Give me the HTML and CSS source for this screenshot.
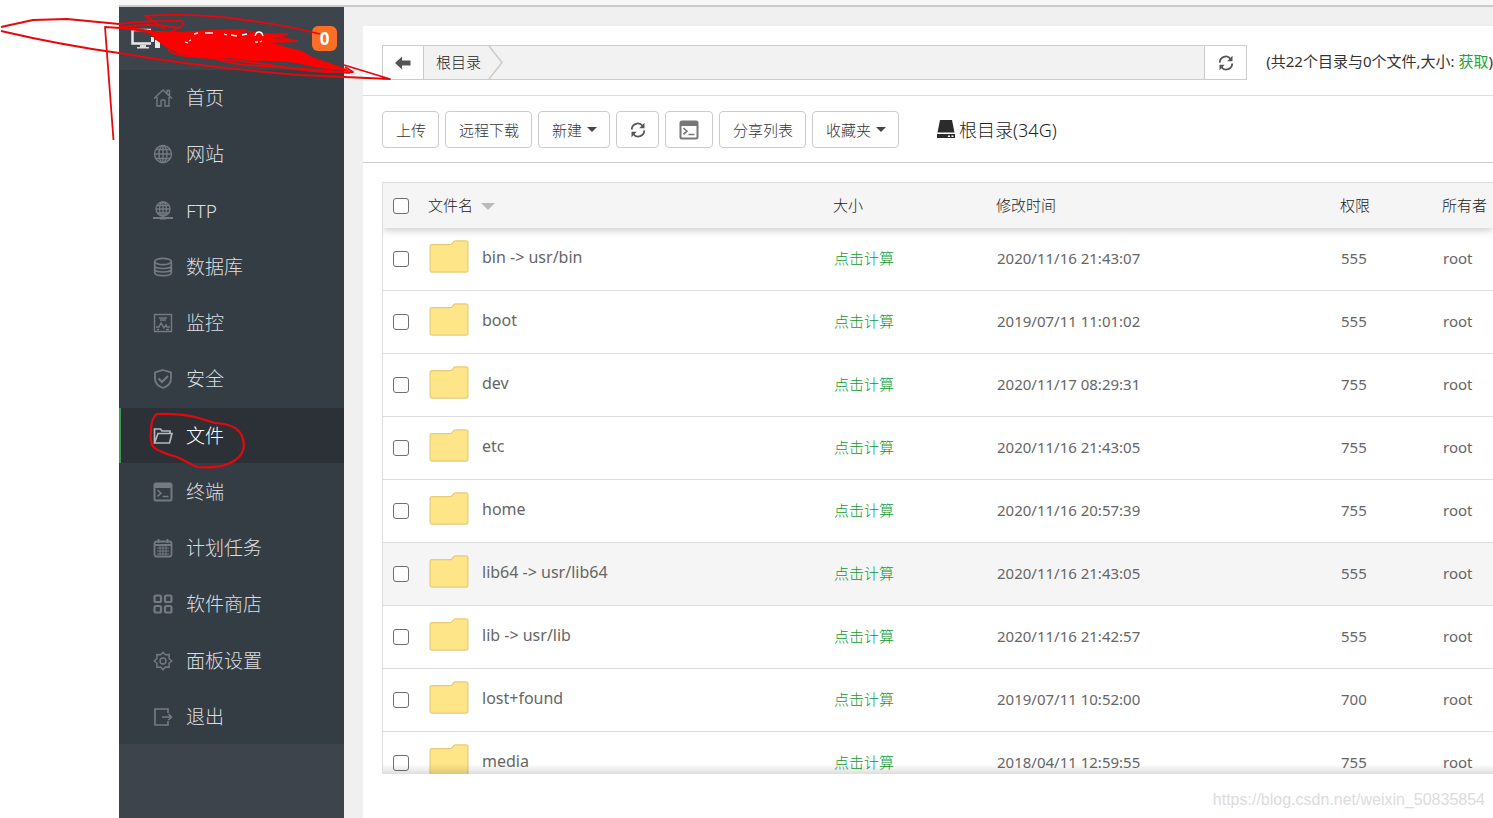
FILE: index.html
```html
<!DOCTYPE html>
<html lang="zh-CN">
<head>
<meta charset="utf-8">
<title>文件</title>
<link rel="stylesheet" href="styles.css">
</head>
<body>
<svg class="defs" width="0" height="0" aria-hidden="true">
  <defs>
    <symbol id="folder" viewBox="0 0 42 36"><path d="M1 7q0-2 2-2h19q2 0 3-2t3-2h11q2 0 2 2v29q0 2-2 2H3q-2 0-2-2z" fill="#fde588" stroke="#e6cc78" stroke-width="1.3"/></symbol>
    <symbol id="refresh" viewBox="0 0 16 16"><path d="M1.800 7.500A6 6 0 0 1 12.500 3.800M14.200 8.500A6 6 0 0 1 3.500 12.200" fill="none" stroke="#555" stroke-width="1.800"/><path d="M14.500.8v5.400H9.200zM1.500 15.200V9.800h5.300z" fill="#555"/></symbol>
    <symbol id="terminal" viewBox="0 0 20 20"><rect x="1.500" y="1.500" width="17" height="17" rx="1.500" fill="none" stroke="currentColor" stroke-width="2"/><path d="M1 2h18v4H1z" fill="currentColor"/><path d="M4.500 8l3.500 3.200-3.500 3.200M9.500 14.500h6" fill="none" stroke="currentColor" stroke-width="1.600"/></symbol>
  </defs>
</svg>
<div class="topline"></div>
<div class="app">
  <aside class="sidebar">
    <div class="brand">
      <svg width="32" height="22" viewBox="0 0 32 22" aria-hidden="true"><path d="M1.500 2v13.500H20M1.500 2H20" fill="none" stroke="#e8e8e8" stroke-width="2.500"/><path d="M9 17h6v2h3v1.500H6V19h3z" fill="#ddd"/><path d="M21 4h3v3h-3zM25 3h3v3h-3zM20 9h3v5h-3zM24 12h5v8h-5z" fill="#e8e8e8"/></svg>
      <span class="badge">0</span>
    </div>
    <nav class="menu">
      <a href="#"><svg viewBox="0 0 20 20"><path d="M1 10.500L10 2l9 8.500M4 9v9h4v-5q0-1 1-1h2q1 0 1 1v5h4V9M14 5V2.500h2.500v5"/></svg>首页</a>
      <a href="#"><svg viewBox="0 0 20 20"><circle cx="10" cy="10" r="8.500"/><ellipse cx="10" cy="10" rx="4" ry="8.500"/><path d="M10 1.500v17M1.500 10h17M3 5.500h14M3 14.500h14"/></svg>网站</a>
      <a href="#"><svg viewBox="0 0 20 20"><circle cx="10" cy="8" r="7"/><ellipse cx="10" cy="8" rx="3.500" ry="7"/><path d="M10 1v17M3 8h14M4 4.500h12M4 12h12"/><path d="M0 17h20M7 17.500h6" stroke-width="2"/></svg>FTP</a>
      <a href="#"><svg viewBox="0 0 20 20"><g stroke-width="1.700"><ellipse cx="10" cy="4.500" rx="8.300" ry="3.200"/><path d="M1.700 4.500v11c0 4.200 16.600 4.200 16.600 0v-11M1.700 8.500c0 4 16.600 4 16.600 0M1.700 12c0 4 16.600 4 16.600 0"/></g></svg>数据库</a>
      <a href="#"><svg viewBox="0 0 20 20"><path d="M1.500 1.500h17v17h-17zM6 5h8M7 7h6M3 14h3l2-4 3 5 2-3 1 2h3M4 16.500h2M13 16.500h3"/></svg>监控</a>
      <a href="#"><svg viewBox="0 0 20 20"><path d="M10 1L18 3.500v6c0 5-4 8-8 9.500-4-1.500-8-4.500-8-9.500v-6z" stroke-width="1.800"/><path d="M5.500 9.500l3.500 3.500 6-6" stroke-width="2.200"/></svg>安全</a>
      <a href="#" class="active"><svg viewBox="0 0 20 20"><path d="M1.500 17V3h6l1.500 2h8v3M1.500 17L5 7.500h14L16.500 17z" stroke-width="1.700"/></svg>文件</a>
      <a href="#"><svg viewBox="0 0 20 20" class="solid"><use href="#terminal"/></svg>终端</a>
      <a href="#"><svg viewBox="0 0 20 20"><rect x="1.500" y="3.500" width="17" height="15" rx="2" stroke-width="1.800"/><path d="M5.500 1v4M14.500 1v4M2 7h16" stroke-width="1.800"/><path d="M4 10h12M4 13h12M4 16h12M7 8v9M10 8v9M13 8v9" stroke-width="1"/></svg>计划任务</a>
      <a href="#"><svg viewBox="0 0 20 20"><g stroke-width="2.200"><rect x="1.500" y="1.500" width="6.500" height="6.500" rx="1.500"/><rect x="12" y="1.500" width="6.500" height="6.500" rx="1.500"/><rect x="1.500" y="12" width="6.500" height="6.500" rx="1.500"/><rect x="12" y="12" width="6.500" height="6.500" rx="1.500"/></g></svg>软件商店</a>
      <a href="#"><svg viewBox="0 0 20 20"><circle cx="10" cy="10" r="3"/><path d="M10 1.200l2.300 2.600 3.900-.3-.2 3.900L18.800 10 16 12.300l.2 3.900-3.900-.2L10 18.800 7.700 16l-3.900.2.200-3.900L1.200 10 4 7.400l-.2-3.900 3.900.3z"/></svg>面板设置</a>
      <a href="#"><svg viewBox="0 0 20 20"><path d="M15 6V2H2v16h13v-4M9 10h9M15.500 7l3 3-3 3" stroke-width="1.700"/></svg>退出</a>
    </nav>
  </aside>
  <main class="panel">
    <div class="pathrow">
      <div class="pathbar">
        <button class="square" aria-label="返回"><svg width="16" height="14" viewBox="0 0 16 14"><path d="M0 7l7-6.500V4.500h8.500v5H7v4z" fill="#555"/></svg></button>
        <a class="crumb" href="#">根目录</a>
        <svg class="chevron" width="16" height="33" viewBox="0 0 16 33" aria-hidden="true"><path d="M1 0l13 16.500L1 33" fill="none" stroke="#ccc" stroke-width="1.600"/></svg>
        <span class="fill"></span>
        <button class="square reload" aria-label="刷新"><svg width="16" height="16"><use href="#refresh"/></svg></button>
      </div>
      <div class="stats">(共22个目录与0个文件,大小: <a href="#">获取</a>)</div>
    </div>
    <div class="toolbar">
      <button>上传</button>
      <button>远程下载</button>
      <button>新建<i class="caret"></i></button>
      <button aria-label="刷新"><svg width="16" height="16"><use href="#refresh"/></svg></button>
      <button aria-label="终端" class="term"><svg width="20" height="20"><use href="#terminal"/></svg></button>
      <button>分享列表</button>
      <button>收藏夹<i class="caret"></i></button>
      <div class="disk"><svg width="20" height="20" viewBox="0 0 20 20" aria-hidden="true"><path d="M4 0h12l2.500 12.500h-17zM1 14h18v4H1z" fill="#2b2b2b"/><path d="M12 15.500h2V17h-2zM15.500 15.500h2V17h-2z" fill="#fff"/></svg>根目录(34G)</div>
    </div>
    <div class="files">
      <table>
        <colgroup><col class="c-check"><col class="c-name"><col class="c-size"><col class="c-time"><col class="c-mode"><col></colgroup>
        <thead><tr><th><input type="checkbox" aria-label="全选"></th><th>文件名<i class="sort"></i></th><th>大小</th><th>修改时间</th><th>权限</th><th>所有者</th></tr></thead>
        <tbody>
          <tr><td><input type="checkbox" aria-label="bin"></td><td><div class="name"><svg width="40" height="34"><use href="#folder"/></svg><span>bin -&gt; usr/bin</span></div></td><td><a href="#">点击计算</a></td><td>2020/11/16 21:43:07</td><td>555</td><td>root</td></tr>
          <tr><td><input type="checkbox" aria-label="boot"></td><td><div class="name"><svg width="40" height="34"><use href="#folder"/></svg><span>boot</span></div></td><td><a href="#">点击计算</a></td><td>2019/07/11 11:01:02</td><td>555</td><td>root</td></tr>
          <tr><td><input type="checkbox" aria-label="dev"></td><td><div class="name"><svg width="40" height="34"><use href="#folder"/></svg><span>dev</span></div></td><td><a href="#">点击计算</a></td><td>2020/11/17 08:29:31</td><td>755</td><td>root</td></tr>
          <tr><td><input type="checkbox" aria-label="etc"></td><td><div class="name"><svg width="40" height="34"><use href="#folder"/></svg><span>etc</span></div></td><td><a href="#">点击计算</a></td><td>2020/11/16 21:43:05</td><td>755</td><td>root</td></tr>
          <tr><td><input type="checkbox" aria-label="home"></td><td><div class="name"><svg width="40" height="34"><use href="#folder"/></svg><span>home</span></div></td><td><a href="#">点击计算</a></td><td>2020/11/16 20:57:39</td><td>755</td><td>root</td></tr>
          <tr class="hover"><td><input type="checkbox" aria-label="lib64"></td><td><div class="name"><svg width="40" height="34"><use href="#folder"/></svg><span>lib64 -&gt; usr/lib64</span></div></td><td><a href="#">点击计算</a></td><td>2020/11/16 21:43:05</td><td>555</td><td>root</td></tr>
          <tr><td><input type="checkbox" aria-label="lib"></td><td><div class="name"><svg width="40" height="34"><use href="#folder"/></svg><span>lib -&gt; usr/lib</span></div></td><td><a href="#">点击计算</a></td><td>2020/11/16 21:42:57</td><td>555</td><td>root</td></tr>
          <tr><td><input type="checkbox" aria-label="lost+found"></td><td><div class="name"><svg width="40" height="34"><use href="#folder"/></svg><span>lost+found</span></div></td><td><a href="#">点击计算</a></td><td>2019/07/11 10:52:00</td><td>700</td><td>root</td></tr>
          <tr><td><input type="checkbox" aria-label="media"></td><td><div class="name"><svg width="40" height="34"><use href="#folder"/></svg><span>media</span></div></td><td><a href="#">点击计算</a></td><td>2018/04/11 12:59:55</td><td>755</td><td>root</td></tr>
        </tbody>
      </table>
    </div>
  </main>
</div>
<div class="watermark">https://blog.csdn.net/weixin_50835854</div>
<svg class="marks" width="400" height="480" viewBox="0 0 400 480" aria-hidden="true">
  <g fill="none" stroke="#e6080b" stroke-width="1.800" stroke-linejoin="round">
    <path d="M113.500 140L105 27q30 1 60 9M1 27l32-7 34-1 52 5M1 31q60 14 118 22 80 14 180 22l91 4L344 65"/>
    <path d="M119 24q30-4 62-3 6 2-2 7-20 8-10 12M119 28q30-6 60 0M165 29L145 16q40-3 85 2 50 6 90 16"/>
    <path d="M345 67l8 5q-30 2-70-5-50-8-98-11-18-2-17-10M119 27q40 4 70 12M200 52q20 12 60 14t90 7"/>
    <path d="M240 30l57 11-40-1 30-6-50 2M152 33l15 14"/>
  </g>
  <path d="M148 32l14-1 20 1q30-3 65-3l-4 5 24-1 20 3-14 2 24 4-26 1 31 8 10 6 32 11 8 4-33-4-23-5q-22-3-44-2l-23-3-13 1-37-5-13-7-10-7z" fill="#fd0000"/>
  <path d="M185 42l3 1M189 41l2-1M194 34l4-1M205 33h8M224 34l3 1M231 35l6 1M242 35l5-1M255 36q1-4 4-4t4 4M255 42h3M260 42l2-1" fill="none" stroke="#fff" stroke-width="1.300"/>
  <path d="M151 432q0-15 6-18 20-1 38 3l20 6q22 1 27 13 6 16-8 25-13 8-37 6l-20-10q-22-6-25-12-2-8-1-13z" fill="none" stroke="#e6080b" stroke-width="2.200"/>
</svg>
</body>
</html>
```

FILE: styles.css
```css
* { box-sizing: border-box; }
body {
  margin: 0;
  height: 100vh;
  padding-left: 119px;
  display: flex;
  flex-direction: column;
  overflow: hidden;
  position: relative;
  background: #fff;
  color: #333;
  font: 15px/20px "Noto Sans", "Noto Sans CJK SC", sans-serif;
}
a { color: #20a53a; text-decoration: none; }
button { font: inherit; color: #555; background: #fff; padding: 0; cursor: pointer; }
.defs { position: absolute; }
.topline { height: 7px; flex: none; background: #f7f7f7; border-bottom: 2px solid #ccc; }
.app { flex: 1; min-height: 0; display: flex; background: #f0f0f1; }

.sidebar { flex: none; width: 225px; background: #3d444c; }
.brand {
  height: 63px;
  padding: 0 7px 0 12px;
  display: flex;
  align-items: center;
  justify-content: space-between;
}
.badge {
  width: 25px;
  height: 25px;
  border-radius: 6px;
  background: #fc6d26;
  color: #fff;
  font-size: 17px;
  font-weight: 700;
  line-height: 25px;
  text-align: center;
}
.menu {
  min-height: 674px;
  display: flex;
  flex-direction: column;
  justify-content: space-between;
  background: #353d44;
}
.menu a {
  height: 55px;
  padding: 1px 0 0 32px;
  border-left: 2px solid transparent;
  display: flex;
  align-items: center;
  gap: 13px;
  color: #dcdee0;
  font-size: 19px;
  font-weight: 300;
}
.menu a.active { background: #2c3138; border-left-color: #3c9a55; color: #fff; }
.menu svg { width: 20px; height: 20px; fill: none; stroke: #737a81; stroke-width: 1.4; }
.menu svg.solid { color: #737a81; stroke: none; }
.menu .active svg { stroke: #b5b8bc; }

.panel {
  flex: 1;
  min-width: 0;
  margin: 19px 0 0 19px;
  padding-bottom: 44px;
  display: flex;
  flex-direction: column;
  background: #fff;
}
.pathrow {
  height: 70px;
  flex: none;
  padding: 19px 0 0 19px;
  display: flex;
  gap: 19px;
  border-bottom: 1px solid #ddd;
}
.pathbar { flex: 1; height: 35px; display: flex; background: #f2f2f2; border: 1px solid #ccc; }
.square { width: 41px; border: 0; border-right: 1px solid #ccc; display: grid; place-items: center; }
.reload { width: 42px; border-right: 0; border-left: 1px solid #ccc; }
.crumb { padding: 0 7px 0 12px; line-height: 33px; color: #222; font-weight: 300; }
.fill { flex: 1; }
.stats { line-height: 33px; white-space: nowrap; }

.toolbar {
  height: 67px;
  flex: none;
  padding: 15px 0 0 19px;
  display: flex;
  align-items: flex-start;
  gap: 6px;
  border-bottom: 1px solid #ccc;
}
.toolbar button {
  height: 37px;
  padding: 0 12px 0 13px;
  border: 1px solid #ccc;
  border-radius: 4px;
  display: flex;
  align-items: center;
  white-space: nowrap;
  font-weight: 300;
  color: #333;
}
.toolbar .term { padding: 0 13px; color: #777; }
.caret { margin-left: 5px; border: 5px solid transparent; border-top-color: #444; border-bottom: 0; }
.disk {
  margin-left: 31px;
  height: 37px;
  display: flex;
  align-items: center;
  gap: 3px;
  font-size: 18px;
  font-weight: 300;
  color: #222;
}

.files {
  flex: 1;
  min-height: 0;
  margin: 19px 0 0 19px;
  overflow: hidden;
  position: relative;
  border: solid #ddd;
  border-width: 1px 0 0 1px;
}
.files::after {
  content: "";
  position: absolute;
  inset: auto 0 0 0;
  height: 10px;
  background: linear-gradient(rgba(0, 0, 0, 0), rgba(0, 0, 0, .13));
}
table { width: 100%; border-collapse: separate; border-spacing: 0; table-layout: fixed; }
.c-check { width: 45px; }
.c-name { width: 405px; }
.c-size { width: 163px; }
.c-time { width: 344px; }
.c-mode { width: 102px; }
thead { position: relative; box-shadow: 0 2px 8px rgba(0, 0, 0, .22); }
th { height: 45px; padding: 0 0 2px; background: #f5f5f5; color: #222; font-weight: 300; text-align: left; white-space: nowrap; }
td { height: 63px; padding: 0 0 2px 1px; border-bottom: 1px solid #ddd; color: #666; white-space: nowrap; }
td a { color: #109a2c; font-weight: 300; }
th:first-child, td:first-child { padding: 0 0 0 10px; }
.hover td { background: #f5f5f5; }
.sort {
  display: inline-block;
  margin-left: 8px;
  vertical-align: middle;
  border: 7px solid transparent;
  border-top-color: #bbb;
  border-bottom: 0;
}
input[type="checkbox"] {
  appearance: none;
  display: block;
  width: 16px;
  height: 16px;
  margin: 0;
  border: 1px solid #6f6f6f;
  border-radius: 3px;
  background: #fff;
}
.name { display: flex; gap: 13px; padding-bottom: 2px; align-items: center; font-size: 16px; }
.name svg { flex: none; }
.watermark {
  position: absolute;
  right: 8px;
  bottom: 8px;
  color: #dcdcdc;
  font: 16px/20px "Liberation Sans", Arial, sans-serif;
}
.marks { position: absolute; left: 0; top: 0; pointer-events: none; }
```
